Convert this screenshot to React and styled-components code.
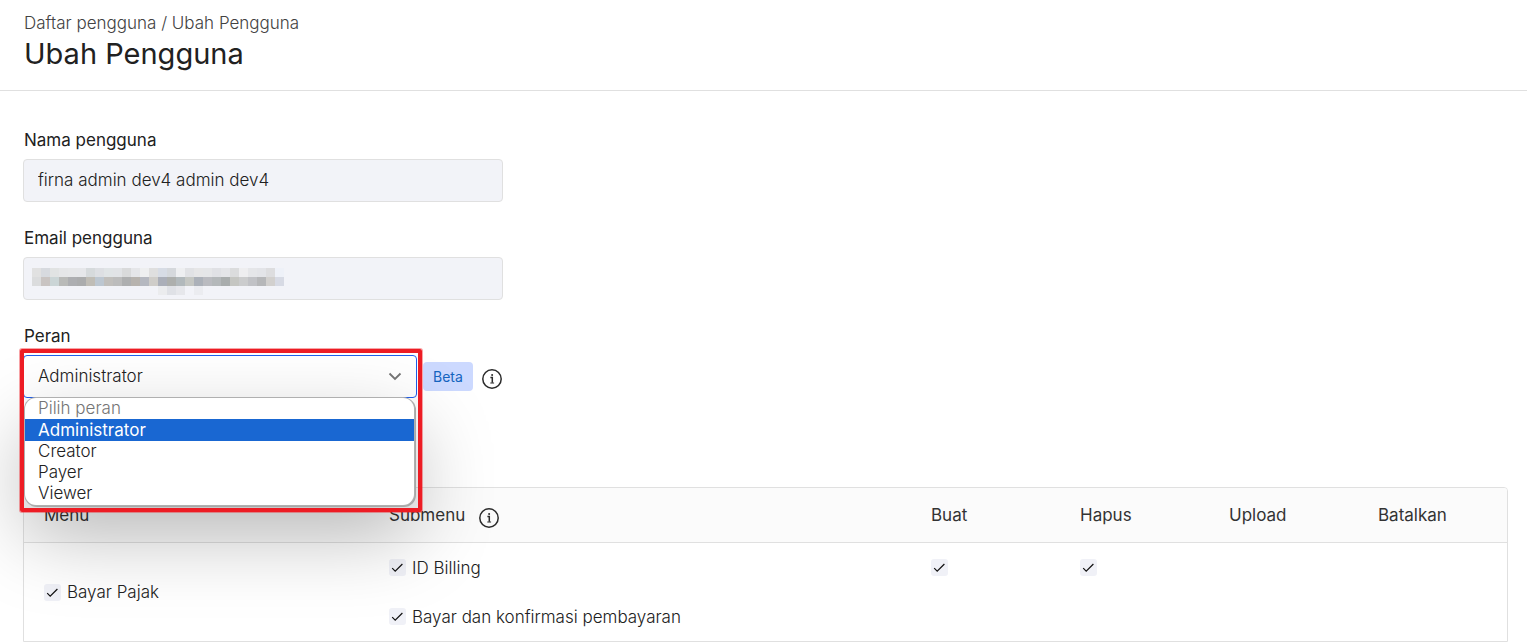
import React, {useState} from 'react';
import styled, {createGlobalStyle} from 'styled-components';

const GlobalStyle = createGlobalStyle`
  * {
    box-sizing: border-box;
  }

  body {
    margin: 0;
    background: #fff;
    color: #212121;
    font-family: Inter, "Liberation Sans", sans-serif;
    font-size: 17px;
    font-weight: 300;
    line-height: 24px;
  }

  input, select, button {
    font: inherit;
    color: inherit;
  }
`;

const Header = styled.header`
  padding: 12px 24px 16px;
  border-bottom: 1px solid #e0e0e0;
`;

const Breadcrumb = styled.nav`
  line-height: 22px;
  color: #424242;
  a {
    color: inherit;
    text-decoration: none;
  }
`;

const Title = styled.h1`
  margin: 0;
  font-size: 29px;
  font-weight: 400;
  line-height: 40px;
`;

const Main = styled.main`
  padding: 37px 19px 0 23px;
`;

const Field = styled.div`
  display: flex;
  flex-direction: column;
  gap: 7px;
  margin-bottom: 24px;
`;

const Label = styled.label`
  padding-left: 1px;
  font-weight: 400;
`;

const InputWrapper = styled.div`
  display: grid;
  align-items: center;
  max-width: 480px;
  > * {
    grid-area: 1 / 1;
  }
`;

const Input = styled.input`
  width: 100%;
  height: 43px;
  padding: 0 14px 1px;
  border: 1px solid #e0e0e0;
  border-radius: 4px;
  background: #f2f3f8;
  outline: none;
`;

const Mosaic = styled.svg`
  display: block;
  margin: 6px 0 0 9px;
  pointer-events: none;
`;

const RoleRow = styled.div`
  display: flex;
  align-items: center;
`;

const SelectWrapper = styled.div`
  position: relative;
  display: grid;
  align-items: center;
  width: 394px;
  margin-right: 6px;
`;

const Select = styled.select`
  grid-area: 1 / 1;
  appearance: none;
  width: 100%;
  height: 43px;
  padding: 0 14px 1px;
  border: 1px solid #1f5eea;
  border-radius: 4px;
  background: #fff;
  outline: none;
`;

const Chevron = styled.svg`
  grid-area: 1 / 1;
  justify-self: end;
  margin-right: 15px;
  pointer-events: none;
`;

const Options = styled.ul`
  position: absolute;
  z-index: 1;
  top: 43px;
  left: 2px;
  right: 3px;
  margin: 0;
  padding: 0 0 1px;
  overflow: hidden;
  list-style: none;
  line-height: 21px;
  background: #fff;
  border-radius: 11px;
  box-shadow: 0 0 0 1px #b0b0b0, 1px 1px 0 1px #a8a8a8, 0 30px 80px rgba(0, 0, 0, 0.27);
`;

const Option = styled.li`
  padding: 0 13px;
  cursor: default;
  ${({$placeholder}) => $placeholder && 'color: #757575;'}
  ${({$selected}) => $selected && `
    color: #fff;
    background: #1967d2;
    line-height: 22px;
    font-weight: 400;
  `}
`;

// red frame over the select and its open list
const Highlight = styled.div`
  position: absolute;
  z-index: 2;
  top: -6px;
  left: -3px;
  right: -5px;
  height: 163px;
  border: 4px solid #ed1c24;
  border-radius: 2px;
  box-shadow: 0 0 0 1px rgba(237, 28, 36, 0.4);
  pointer-events: none;
`;

const Badge = styled.span`
  padding: 0 10px;
  border-radius: 4px;
  font-size: 14px;
  font-weight: 400;
  line-height: 29px;
  color: #1565c0;
  background: #ccd9ff;
`;

const InfoButton = styled.button`
  display: inline-flex;
  margin: 0;
  padding: 5px 0 0;
  border: 0;
  background: none;
  vertical-align: middle;
`;

const BadgeGroup = styled.div`
  display: flex;
  align-items: center;
  gap: 9px;
`;

const TableWrapper = styled.div`
  margin-top: 89px;
  border: 1px solid #e0e0e0;
  border-radius: 4px 4px 0 0;
  overflow: hidden;
`;

const Table = styled.table`
  width: 100%;
  table-layout: fixed;
  border-spacing: 0;
`;

const Th = styled.th`
  width: ${({$width}) => $width || 'auto'};
  height: 55px;
  padding: 0 20px;
  text-align: left;
  font-weight: 400;
  color: #333;
  background: #fbfbfb;
  border-bottom: 1px solid #e0e0e0;
`;

const ThContent = styled.div`
  display: flex;
  align-items: center;
  gap: 14px;
`;

const Td = styled.td`
  height: 49px;
  padding: 0 20px;
`;

const CheckLabel = styled.label`
  display: flex;
  align-items: center;
  gap: 6px;
`;

const CheckBox = styled.span`
  display: grid;
  place-items: center;
  width: 17px;
  height: 17px;
  > * {
    grid-area: 1 / 1;
  }
  svg {
    visibility: hidden;
    pointer-events: none;
  }
  input:checked + svg {
    visibility: visible;
  }
`;

const CheckInput = styled.input`
  appearance: none;
  width: 17px;
  height: 17px;
  margin: 0;
  border-radius: 3px;
  background: rgba(226, 228, 240, 0.5);
`;

const MOSAIC = [
  'e1e1e1 d7dadf e1e3e3 e5e6e8 e6e7e9 e6e7ea d6dadc dddfe3 e0e4e6 e1e3e6 d9dadb e5e6e9 eeeff0 dfdfdf d7dce5 d5d8dc eeeff1 e1e2e5 e6e6e7 e5e6e8 e0e1e5 e4e5e8 dbdcdd eeeef0 e5e6e9 e3e4e8 dddddf eef1f8',
  'dbdcdd c9c4c2 cbd5d6 b9bab8 adaeb1 abacad c0bdb6 bdc7d1 c1bfbc bcbcbc aeafb0 b7b3ae b5b8c0 cfcdc9 abafb9 adafad b2b9bc c5c7c3 acb1b9 babbc0 b4b8ba a9adad c5c6c2 cbcccd c1c2c6 b6b7b9 d2d0ce d7dae4',
  '- - - - - - - - - - - - - - ebecee dfe1e6 e6e7eb - ebecf0',
];

const ROLES = ['Administrator', 'Creator', 'Payer', 'Viewer'];
const ACTIONS = ['Buat', 'Hapus', 'Upload', 'Batalkan'];
const SUBMENUS = [
  {name: 'ID Billing', actions: ['Buat', 'Hapus']},
  {name: 'Bayar dan konfirmasi pembayaran', actions: []},
];

const CensoredText = () => (
  <Mosaic width="252" height="27" shapeRendering="crispEdges" aria-hidden="true">
    {MOSAIC.map((row, y) => row.split(' ').map((color, x) => color !== '-' && (
      <rect key={`${x}-${y}`} x={x * 9} y={y * 9} width="9" height="9" fill={`#${color}`} />
    )))}
  </Mosaic>
);

const Info = ({label}) => (
  <InfoButton type="button" aria-label={label}>
    <svg width="20" height="20" viewBox="0 0 20 20" fill="none" stroke="#2b2b2b">
      <circle cx="10" cy="10" r="9.2" strokeWidth="1.5" />
      <path d="M8.4 8.4h1.9v5.4" strokeWidth="1.5" />
      <path d="M8.3 14h3.8" strokeWidth="1" />
      <circle cx="10.1" cy="6" r="1" fill="#2b2b2b" stroke="none" />
    </svg>
  </InfoButton>
);

const Check = ({label, text}) => (
  <CheckLabel>
    <CheckBox>
      <CheckInput type="checkbox" defaultChecked aria-label={label} />
      <svg width="17" height="17" viewBox="0 0 17 17" fill="none" stroke="#111" strokeWidth="1.2">
        <path d="M3.2 9.2l3 3L13.4 5" />
      </svg>
    </CheckBox>
    {text}
  </CheckLabel>
);

const App = () => {
  const [role, setRole] = useState('Administrator');
  const [open, setOpen] = useState(true);

  const pick = value => {
    setRole(value);
    setOpen(false);
  };

  return (
    <>
      <GlobalStyle />
      <Header>
        <Breadcrumb>
          <a href="#users">Daftar pengguna</a> / <span>Ubah Pengguna</span>
        </Breadcrumb>
        <Title>Ubah Pengguna</Title>
      </Header>
      <Main>
        <Field>
          <Label htmlFor="name">Nama pengguna</Label>
          <InputWrapper>
            <Input id="name" readOnly value="firna admin dev4 admin dev4" />
          </InputWrapper>
        </Field>
        <Field>
          <Label htmlFor="email">Email pengguna</Label>
          <InputWrapper>
            <Input id="email" readOnly value="" />
            <CensoredText />
          </InputWrapper>
        </Field>
        <Field>
          <Label htmlFor="role">Peran</Label>
          <RoleRow>
            <SelectWrapper>
              <Select
                id="role"
                value={role}
                onChange={e => setRole(e.target.value)}
                onMouseDown={e => {
                  e.preventDefault();
                  setOpen(!open);
                }}
              >
                {ROLES.map(name => <option key={name}>{name}</option>)}
              </Select>
              <Chevron width="14" height="9" viewBox="0 0 14 9" fill="none" stroke="#757575" strokeWidth="1.8">
                <path d="M1.5 1.5L7 7l5.5-5.5" />
              </Chevron>
              {open && (
                <Options role="listbox" aria-label="Peran">
                  <Option $placeholder>Pilih peran</Option>
                  {ROLES.map(name => (
                    <Option
                      key={name}
                      role="option"
                      aria-selected={name === role}
                      $selected={name === role}
                      onClick={() => pick(name)}
                    >
                      {name}
                    </Option>
                  ))}
                </Options>
              )}
              {open && <Highlight />}
            </SelectWrapper>
            <BadgeGroup>
              <Badge>Beta</Badge>
              <Info label="Info peran" />
            </BadgeGroup>
          </RoleRow>
        </Field>
        <TableWrapper>
          <Table>
            <thead>
              <tr>
                <Th $width="345px">Menu</Th>
                <Th>
                  <ThContent>Submenu <Info label="Info submenu" /></ThContent>
                </Th>
                {ACTIONS.map(action => <Th key={action} $width="149px">{action}</Th>)}
              </tr>
            </thead>
            <tbody>
              {SUBMENUS.map(({name, actions}, idx) => (
                <tr key={name}>
                  {idx === 0 && <Td rowSpan={SUBMENUS.length}><Check text="Bayar Pajak" /></Td>}
                  <Td><Check text={name} /></Td>
                  {ACTIONS.map(action => (
                    <Td key={action}>
                      {actions.includes(action) && <Check label={`${action} ${name}`} />}
                    </Td>
                  ))}
                </tr>
              ))}
            </tbody>
          </Table>
        </TableWrapper>
      </Main>
    </>
  );
};

export default App;
